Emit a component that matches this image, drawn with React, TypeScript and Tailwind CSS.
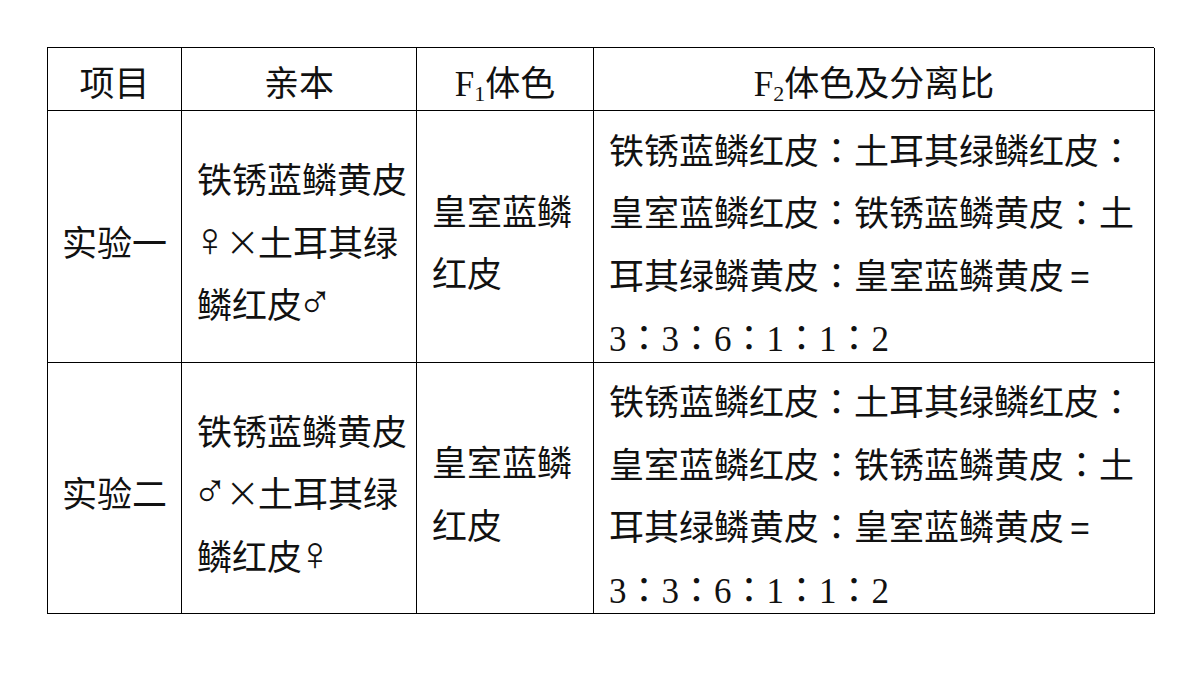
import type { ReactNode } from 'react'

const Colon = () => <span className="font-['Noto_Sans_CJK_TC',sans-serif]">：</span>
const Gender = ({ c }: { c: string }) => (
  <span className="inline-block w-[28px] -translate-x-[5px] font-['DejaVu_Sans',sans-serif] text-[48px] leading-[40px] font-light">
    {c}
  </span>
)
const Times = () => (
  <span className="mr-[2px] inline-block w-[31px] text-center font-['DejaVu_Sans',sans-serif] text-[42px] leading-[40px] font-extralight">
    ×
  </span>
)
const Eq = () => <span className="pl-[6px] font-['Liberation_Sans',sans-serif] text-[34px]">=</span>

const rows: { name: string; parents: ReactNode[] }[] = [
  {
    name: '实验一',
    parents: [
      '铁锈蓝鳞黄皮',
      <>
        <Gender c="♀" />
        <Times />
        土耳其绿
      </>,
      <>
        鳞红皮
        <Gender c="♂" />
      </>,
    ],
  },
  {
    name: '实验二',
    parents: [
      '铁锈蓝鳞黄皮',
      <>
        <Gender c="♂" />
        <Times />
        土耳其绿
      </>,
      <>
        鳞红皮
        <Gender c="♀" />
      </>,
    ],
  },
]

const f2Lines: ReactNode[] = [
  <>
    铁锈蓝鳞红皮<Colon />土耳其绿鳞红皮<Colon />
  </>,
  <>
    皇室蓝鳞红皮<Colon />铁锈蓝鳞黄皮<Colon />土
  </>,
  <>
    耳其绿鳞黄皮<Colon />皇室蓝鳞黄皮<Eq />
  </>,
  <>
    3<Colon />3<Colon />6<Colon />1<Colon />1<Colon />2
  </>,
]

const cell = 'flex flex-col border-r border-b border-black px-[15px] pt-[17px]'
const line = 'h-[62.5px] shrink-0 whitespace-nowrap'

export default function App() {
  return (
    <div className="h-[675px] w-[1200px] bg-white pt-[47px] pl-[47px] font-['Liberation_Serif','Noto_Sans_CJK_SC',serif] text-[35px] leading-[62.5px] text-[#111]">
      <div className="grid w-[1107px] grid-cols-[134px_235px_177px_561px] grid-rows-[63px_252px_251px] border-t border-l border-black">
        {/* header */}
        <div className={`${cell} items-center justify-center !pt-[13px]`}>项目</div>
        <div className={`${cell} items-center justify-center !pt-[13px]`}>亲本</div>
        <div className={`${cell} items-center justify-center !pt-[13px]`}>
          <span>
            F<sub className="relative top-[5px] align-baseline text-[22px]">1</sub>体色
          </span>
        </div>
        <div className={`${cell} items-center justify-center !pt-[13px]`}>
          <span>
            F<sub className="relative top-[5px] align-baseline text-[22px]">2</sub>体色及分离比
          </span>
        </div>

        {rows.map((r) => (
          <div key={r.name} className="contents">
            <div className={`${cell} items-center justify-center whitespace-nowrap !px-0`}>{r.name}</div>
            <div className={`${cell} justify-center`}>
              {r.parents.map((l, i) => (
                <div key={i} className={line}>
                  {l}
                </div>
              ))}
            </div>
            <div className={`${cell} justify-center`}>
              <div className={line}>皇室蓝鳞</div>
              <div className={line}>红皮</div>
            </div>
            <div className={`${cell} justify-center !pt-[12px]`}>
              {f2Lines.map((l, i) => (
                <div key={i} className={line}>
                  {l}
                </div>
              ))}
            </div>
          </div>
        ))}
      </div>
    </div>
  )
}
